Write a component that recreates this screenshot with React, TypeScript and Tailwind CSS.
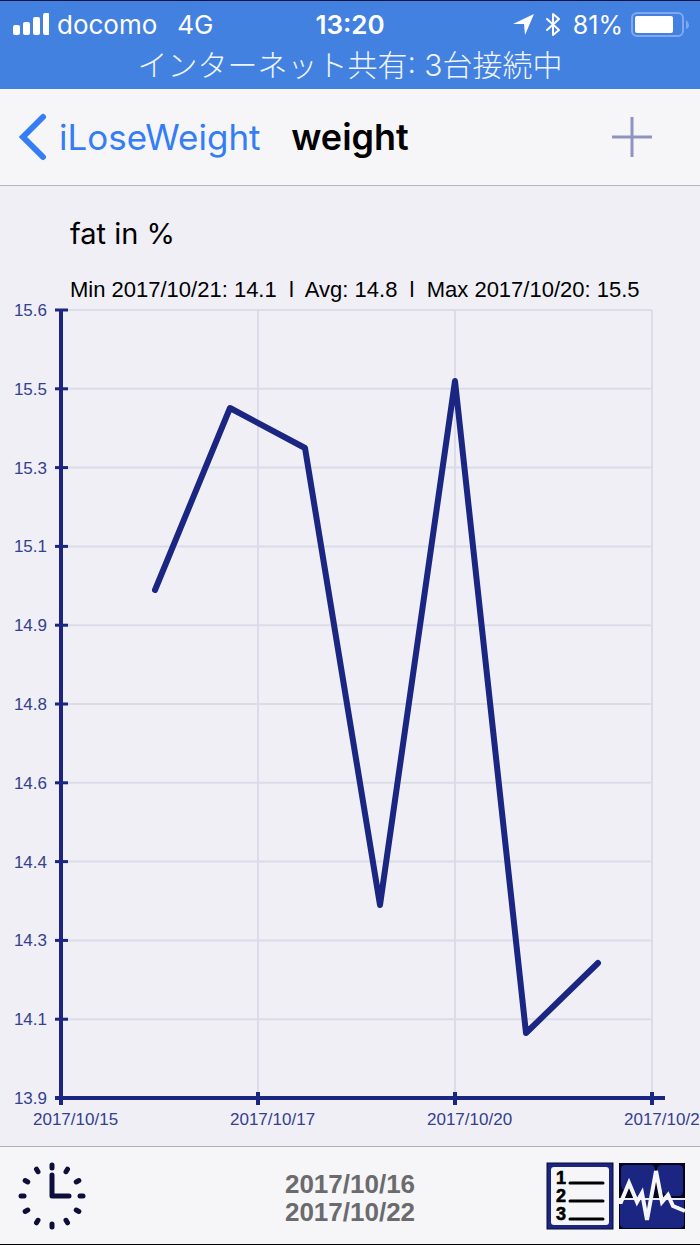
import type { ReactNode } from "react";

const NAVY = "#1b2683";

const yTicks = ["15.6", "15.5", "15.3", "15.1", "14.9", "14.8", "14.6", "14.4", "14.3", "14.1", "13.9"];
const xTicks = ["2017/10/15", "2017/10/17", "2017/10/20", "2017/10/22"];

// plot area inside the chart's view box
const LEFT = 61;
const TOP = 8;
const X_STEP = 197;
const Y_STEP = 78.8;
const BOTTOM = TOP + Y_STEP * (yTicks.length - 1);
const RIGHT = LEFT + X_STEP * (xTicks.length - 1);

const points: [number, number][] = [
  [155, 288],
  [230, 106],
  [305, 146],
  [380, 603],
  [455, 79],
  [526, 731],
  [598, 661],
];

function SignalBars() {
  return (
    <svg className="h-6 w-9" viewBox="0 0 36 24" fill="white" aria-hidden="true">
      <rect x="0" y="12" width="7" height="10" rx="2" />
      <rect x="10" y="9" width="7" height="13" rx="2" />
      <rect x="20" y="4" width="7" height="18" rx="2" />
      <rect x="30" y="0" width="7" height="22" rx="2" />
    </svg>
  );
}

function StatusIcons() {
  return (
    <svg className="h-7 w-[52px]" viewBox="0 0 52 28" aria-hidden="true">
      <path d="M0 13 21 3 12 24 11 13Z" fill="white" />
      <path
        d="M34 8 46 19 40 24V3L46 8 34 19"
        fill="none"
        stroke="white"
        strokeWidth="2"
        strokeLinejoin="round"
        strokeLinecap="round"
      />
    </svg>
  );
}

function Battery() {
  return (
    <svg className="h-7 w-[59px]" viewBox="0 0 59 28" aria-hidden="true">
      <rect x="1" y="2" width="51" height="23" rx="5" fill="none" stroke="#7fa9ec" strokeWidth="2" />
      <rect x="4" y="5" width="38" height="17" rx="2" fill="white" />
      <path d="M55 9Q58 11 58 14T55 18Z" fill="#7fa9ec" />
    </svg>
  );
}

function StatusBar() {
  return (
    <header className="border-t border-[#0b1440] bg-[#4381e1] pt-2 pb-1 text-white">
      <div className="grid h-8 grid-cols-[1fr_auto_1fr] items-center text-[26px] leading-8">
        <div className="flex items-center pl-[13px]">
          <SignalBars />
          <span className="ml-2">docomo</span>
          <span className="ml-5">4G</span>
        </div>
        <span className="font-semibold">13:20</span>
        <div className="flex items-center justify-end pr-[10px]">
          <StatusIcons />
          <span className="ml-2 text-[25px]">81%</span>
          <span className="ml-2">
            <Battery />
          </span>
        </div>
      </div>
      <p className="pt-2 pb-1 text-center font-['Inter','Noto_Sans_CJK_JP',sans-serif] text-[30px] leading-8 font-light text-blue-50">
        インターネット共有: 3台接続中
      </p>
    </header>
  );
}

function NavBar() {
  return (
    <nav className="grid h-[97px] grid-cols-[1fr_auto_1fr] items-center border-b border-[#b5b5bb] bg-[#f6f6f9]">
      <a href="#" className="flex items-center pl-[18px] text-[35px] whitespace-nowrap text-[#357df6]">
        <svg className="mr-3 h-12 w-[29px] shrink-0" viewBox="0 0 29 48" aria-hidden="true">
          <path
            d="M25 4 5 24 25 44"
            fill="none"
            stroke="currentColor"
            strokeWidth="6"
            strokeLinecap="round"
            strokeLinejoin="miter"
          />
        </svg>
        iLoseWeight
      </a>
      <h1 className="text-4xl font-semibold text-black">weight</h1>
      <button type="button" aria-label="Add" className="mr-12 justify-self-end">
        <svg className="size-10" viewBox="0 0 40 40" aria-hidden="true">
          <path d="M20 0V40M0 20H40" stroke="#8d94c1" strokeWidth="3" />
        </svg>
      </button>
    </nav>
  );
}

function FatChart() {
  return (
    <svg
      className="block w-full font-['Liberation_Sans',Arial,sans-serif]"
      viewBox="0 0 700 838"
      role="img"
      aria-label="fat in %"
    >
      <g stroke="#dcdce9" strokeWidth="2">
        {yTicks.map((label, i) => (
          <line key={label} x1={LEFT} x2={RIGHT} y1={TOP + i * Y_STEP} y2={TOP + i * Y_STEP} />
        ))}
        {xTicks.map((label, i) => (
          <line key={label} x1={LEFT + i * X_STEP} x2={LEFT + i * X_STEP} y1={TOP} y2={BOTTOM} />
        ))}
      </g>
      <g stroke={NAVY} strokeWidth="3">
        <path d={`M${LEFT} ${TOP}V${BOTTOM + 6}M${LEFT - 6} ${BOTTOM}H${RIGHT + 13}`} strokeWidth="4" />
        {yTicks.map((label, i) => (
          <line key={label} x1={LEFT - 6} x2={LEFT + 7} y1={TOP + i * Y_STEP} y2={TOP + i * Y_STEP} />
        ))}
        {xTicks.map((label, i) => (
          <line
            key={label}
            x1={LEFT + i * X_STEP}
            x2={LEFT + i * X_STEP}
            y1={BOTTOM - 6}
            y2={BOTTOM + 7}
            strokeWidth="4"
          />
        ))}
      </g>
      <g fill="#35408f" fontSize="17">
        {yTicks.map((label, i) => (
          <text key={label} x="47" y={TOP + i * Y_STEP + 6} textAnchor="end">
            {label}
          </text>
        ))}
        {xTicks.map((label, i) => (
          <text key={label} x={LEFT + i * X_STEP - 28} y={BOTTOM + 27}>
            {label}
          </text>
        ))}
      </g>
      <polyline
        points={points.map((p) => p.join(",")).join(" ")}
        fill="none"
        stroke={NAVY}
        strokeWidth="6"
        strokeLinecap="round"
        strokeLinejoin="round"
      />
    </svg>
  );
}

function ClockIcon() {
  const marks = Array.from({ length: 12 }, (_, i) => i * 30);
  return (
    <svg className="size-[68px]" viewBox="0 0 68 68" stroke="#0d0f3a" strokeLinecap="round" aria-hidden="true">
      {marks.map((angle) => (
        <line key={angle} x1="34" x2="34" y1="3" y2="6" strokeWidth="5" transform={`rotate(${angle} 34 34)`} />
      ))}
      <path d="M34 13V34H51" fill="none" strokeWidth="5" strokeLinejoin="round" />
    </svg>
  );
}

function ListIcon() {
  return (
    <svg className="size-[68px]" viewBox="0 0 68 68" aria-hidden="true">
      <rect x="1" y="1" width="66" height="66" fill={NAVY} stroke="#080b30" />
      <rect x="5" y="5" width="58" height="58" rx="3" fill="#f6f6f9" />
      <g
        fill="black"
        stroke="black"
        strokeWidth="0.6"
        fontSize="18"
        fontWeight="700"
        className="font-['Liberation_Sans',Arial,sans-serif]"
      >
        <text x="10" y="22">1</text>
        <text x="10" y="40">2</text>
        <text x="10" y="58">3</text>
      </g>
      <path d="M24 21H57M24 39H57M24 57H57" stroke="black" strokeWidth="3" strokeLinecap="round" />
    </svg>
  );
}

function PulseIcon() {
  return (
    <svg className="size-[68px]" viewBox="0 0 68 68" aria-hidden="true">
      <rect x="1" y="1" width="66" height="66" fill="#04051a" />
      <path
        d="M7 3H33Q37 3 37 8V66H7Q2 66 2 61V38L9 31Q3 28 3 22V8Q3 3 7 3Z"
        fill={NAVY}
      />
      <path d="M44 3H61Q65 3 65 8V29Q65 34 60 34H50L39 26V8Q39 3 44 3Z" fill={NAVY} />
      <path d="M30 37H66V61Q66 66 61 66H30Z" fill={NAVY} />
      <path d="M2 36V26L9 30ZM11 25 4 36H18ZM36 20 31 36H43Z" fill="#04051a" />
      <path d="M1 37H67" stroke="#e8e9f3" strokeWidth="2" />
      <path
        d="M1 40H3L11 21 19 40 24 31 29 58 38 9 44 40 50 33 55 44 67 49"
        fill="none"
        stroke="#f6f6f9"
        strokeWidth="4"
        strokeLinejoin="miter"
      />
    </svg>
  );
}

function ToolButton({ label, children }: { label: string; children: ReactNode }) {
  return (
    <button type="button" aria-label={label} className="shrink-0">
      {children}
    </button>
  );
}

function Toolbar() {
  return (
    <footer className="grid h-[99px] grid-cols-[1fr_auto_1fr] items-center border-t border-b border-t-[#b0b0b3] border-b-black bg-[#f6f6f9]">
      <div className="flex pl-[18px]">
        <ToolButton label="Period">
          <ClockIcon />
        </ToolButton>
      </div>
      <p className="pt-1 text-center font-['Liberation_Sans',Arial,sans-serif] text-[26px] leading-7 font-bold text-[#6b6b6d]">
        2017/10/16
        <br />
        2017/10/22
      </p>
      <div className="flex justify-end gap-1 pr-[14px]">
        <ToolButton label="List">
          <ListIcon />
        </ToolButton>
        <ToolButton label="Chart">
          <PulseIcon />
        </ToolButton>
      </div>
    </footer>
  );
}

export default function App() {
  return (
    <div className="flex min-h-screen flex-col overflow-hidden bg-[#efeff5] font-['Inter',sans-serif]">
      <StatusBar />
      <NavBar />
      <main className="flex-1">
        <div className="pt-7 pl-[70px] text-black">
          <h2 className="text-[29px] leading-10">fat in %</h2>
          <p className="pt-6 font-['Liberation_Sans',Arial,sans-serif] text-[22px] leading-6 whitespace-pre">
            {"Min 2017/10/21: 14.1  l  Avg: 14.8  l  Max 2017/10/20: 15.5"}
          </p>
        </div>
        <FatChart />
      </main>
      <Toolbar />
    </div>
  );
}
